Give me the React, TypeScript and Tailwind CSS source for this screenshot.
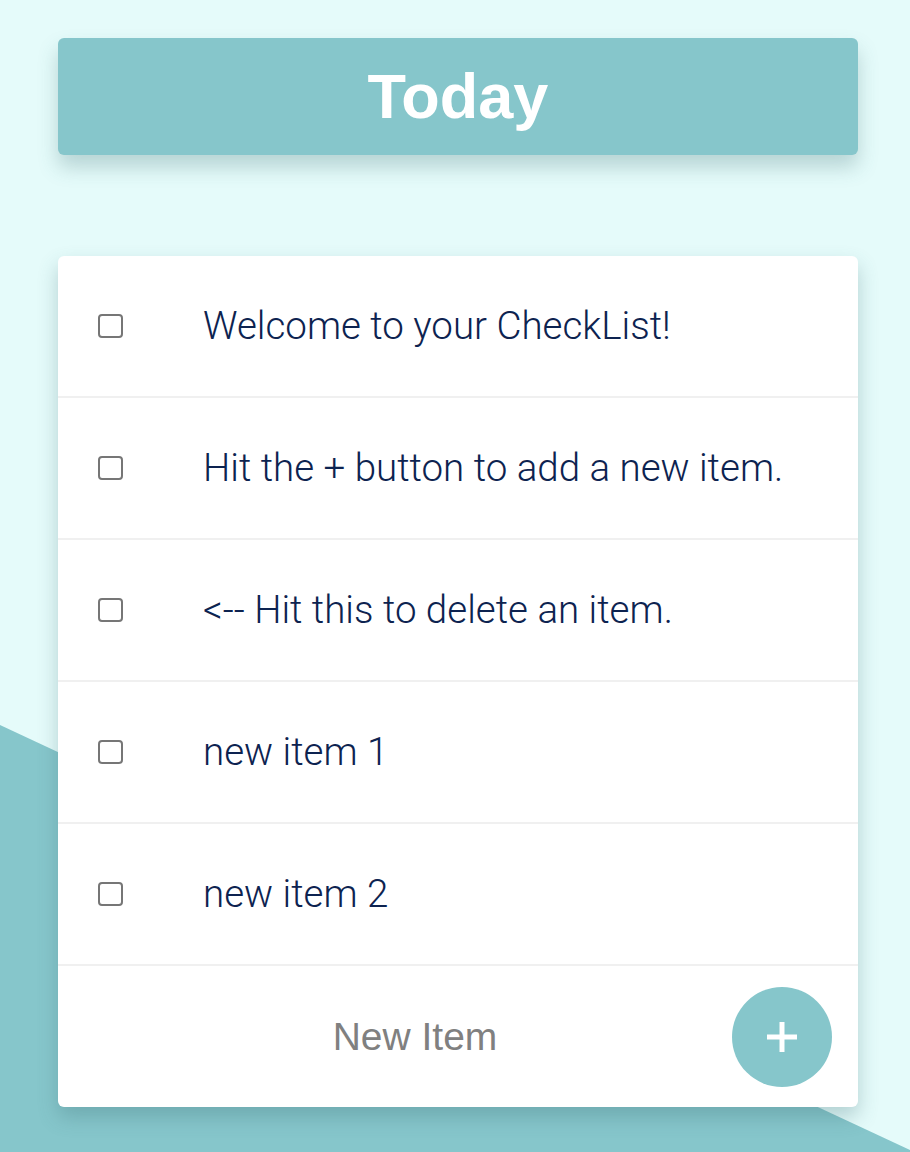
import React, { useState } from 'react';

type Item = {
  id: number;
  text: string;
  done: boolean;
};

const initialItems: Item[] = [
  { id: 1, text: 'Welcome to your CheckList!', done: false },
  { id: 2, text: 'Hit the + button to add a new item.', done: false },
  { id: 3, text: '<-- Hit this to delete an item.', done: false },
  { id: 4, text: 'new item 1', done: false },
  { id: 5, text: 'new item 2', done: false },
];

const App: React.FC = () => {
  const [items, setItems] = useState<Item[]>(initialItems);
  const [draft, setDraft] = useState('');

  const toggle = (id: number) => {
    setItems(items.map((it) => (it.id === id ? { ...it, done: !it.done } : it)));
  };

  const addItem = () => {
    if (!draft.trim()) return;
    setItems([...items, { id: Date.now(), text: draft, done: false }]);
    setDraft('');
  };

  return (
    <div className="relative h-[1152px] w-[910px] overflow-hidden bg-[#e5fbfa] font-['Liberation_Sans',Arial,sans-serif]">
      {/* teal slope behind the card */}
      <div className="absolute inset-0 bg-[#86c6cb] [clip-path:polygon(0_725px,100%_1150px,100%_100%,0_100%)]" />

      <div className="relative flex w-[910px] flex-col px-[58px] pt-[38px]">
        <div className="flex h-[117px] w-[800px] items-center justify-center rounded-md bg-[#86c6cb] shadow-[0_12px_20px_rgba(60,110,115,0.28)]">
          <h1 className="text-[63px] font-bold leading-none text-white">Today</h1>
        </div>

        <div className="mt-[101px] w-[800px] overflow-hidden rounded-md bg-white shadow-[0_10px_20px_rgba(60,110,115,0.3)]">
          {items.map((it) => (
            <div key={it.id} className="flex h-[142px] items-center border-b-2 border-[#f0f0f0]">
              <button
                onClick={() => toggle(it.id)}
                className="ml-[40px] flex h-[24px] w-[25px] shrink-0 items-center justify-center rounded-[4px] border-2 border-[#767676] bg-white"
              >
                {it.done && <span className="h-[10px] w-[10px] bg-[#767676]" />}
              </button>
              <span className="ml-[80px] font-['Roboto',sans-serif] text-[38.5px] font-light text-[#0d2350]">{it.text}</span>
            </div>
          ))}
          <div className="flex h-[141px] items-center">
            <input
              value={draft}
              onChange={(e) => setDraft(e.target.value)}
              placeholder="New Item"
              className="h-full w-[714px] bg-transparent text-center text-[39px] text-[#555] outline-none placeholder:text-[#808080]"
            />
            <button
              onClick={addItem}
              className="ml-[-40px] flex h-[100px] w-[100px] shrink-0 items-center justify-center rounded-full bg-[#86c6cb]"
            >
              <svg width="30" height="30" viewBox="0 0 30 30">
                <path d="M15 0v30M0 15h30" stroke="white" strokeWidth="5" />
              </svg>
            </button>
          </div>
        </div>
      </div>
    </div>
  );
};

export default App;
